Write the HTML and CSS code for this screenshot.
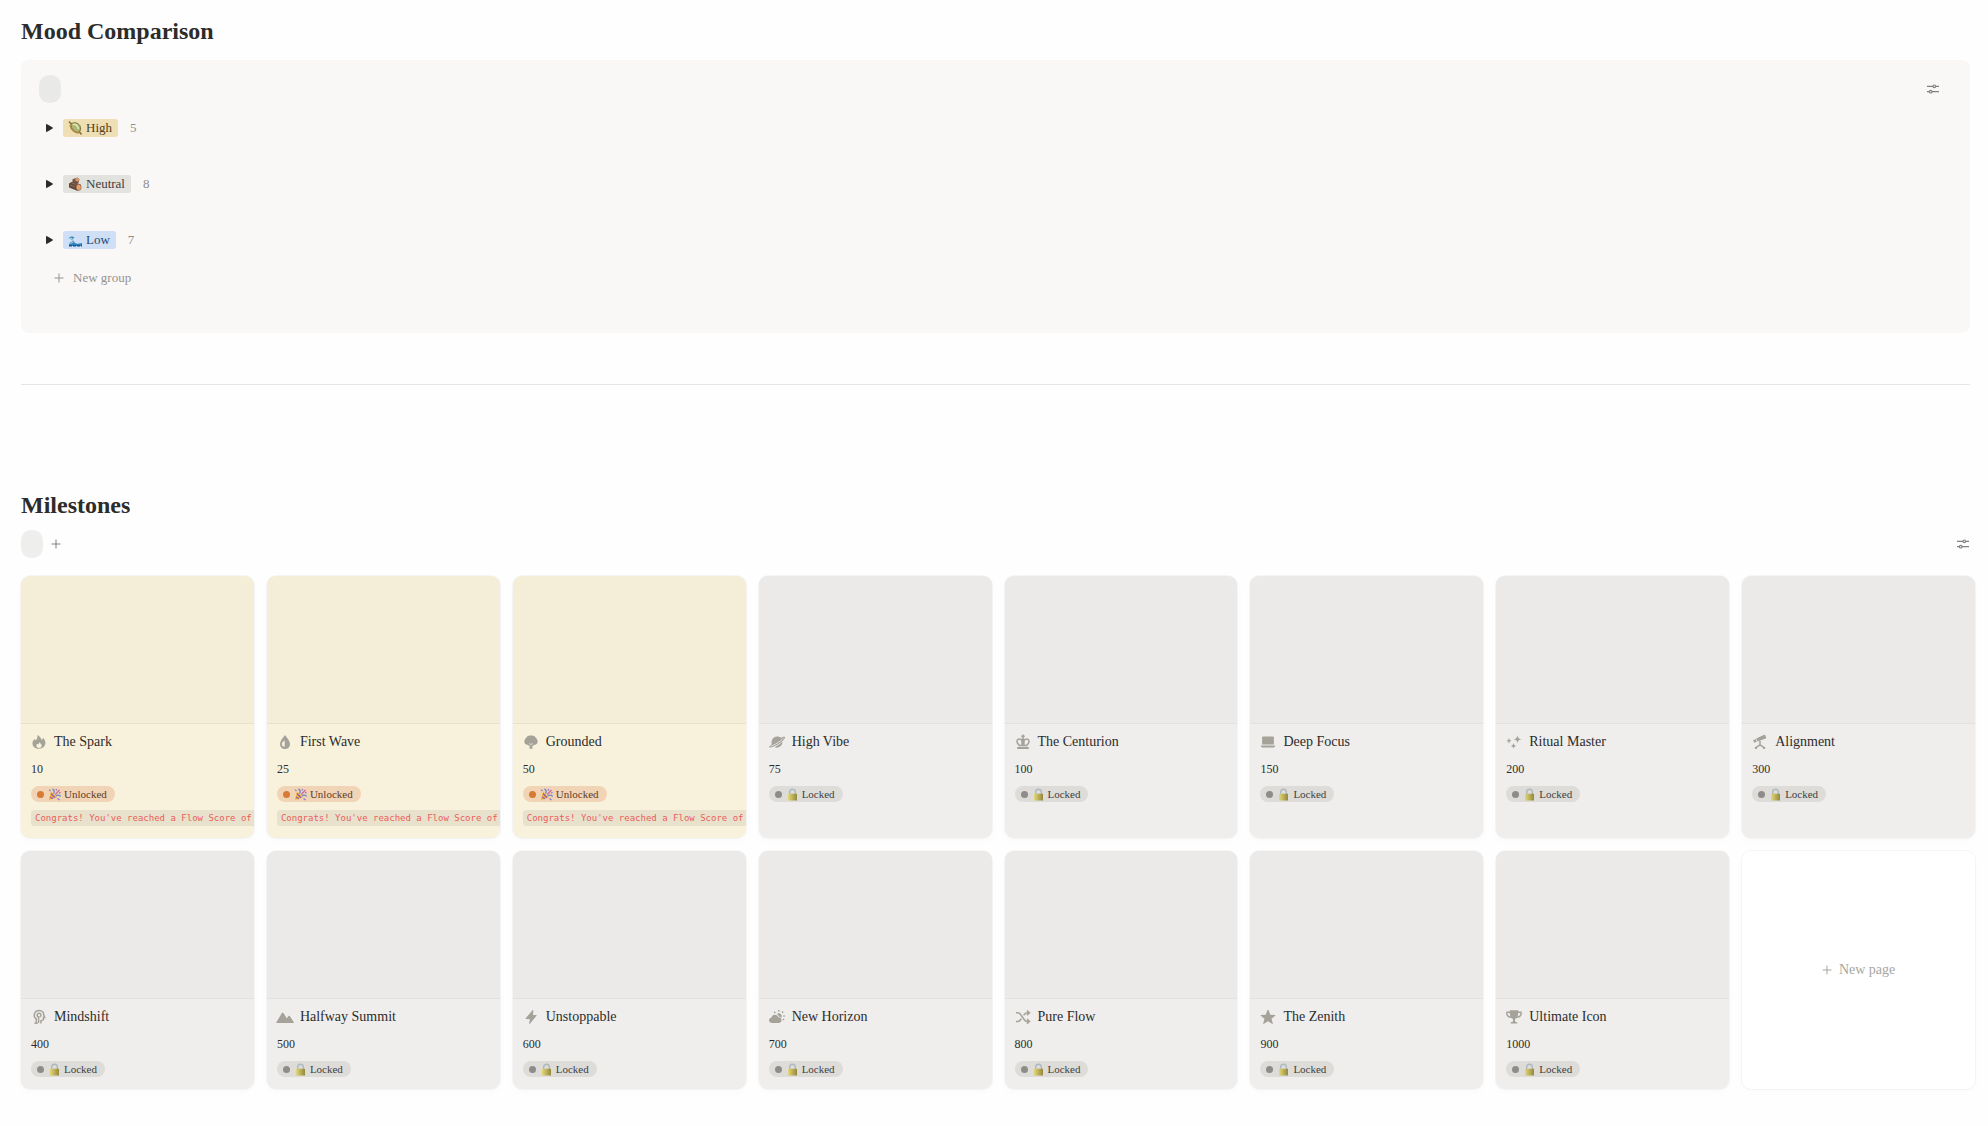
FILE: index.html
```html
<!doctype html>
<html lang="en">
	<head>
		<meta charset="UTF-8" />
		<meta name="viewport" content="width=device-width, initial-scale=1.0" />
		<title>Milestones</title>
		<link rel="stylesheet" href="styles.css">
	</head>
	<body>
		<!-- icon sprite -->
		<svg class="sprite" aria-hidden="true">
			<symbol id="sliders" viewBox="0 0 14 14">
				<path d="M1 4.300h6M9.600 4.300H13M1 9.700h2.400M6 9.700H13" />
				<circle cx="8.300" cy="4.300" r="1.300" />
				<circle cx="4.700" cy="9.700" r="1.300" />
			</symbol>
			<symbol id="plus" viewBox="0 0 10 10"><path d="M5 .5v9M.5 5h9" /></symbol>
			<symbol id="triangle" viewBox="0 0 7 8"><path d="M.7 0 6.7 3.6q.4.4 0 .8L.7 8Q0 8 0 7.300V.7Q0 0 .7 0z" /></symbol>
			<symbol id="flame" viewBox="0 0 16 16">
				<path d="M6.300 1C7 4 5.500 5 4.900 6.600L3.700 5C2 6.500 1.300 8 1.500 9.700 1.800 13 4.500 14.800 8 14.800s6.300-2.300 6.400-5.700c.1-2-1-4.200-2.200-5.200L10.500 6.200C10.300 4 8.700 2 6.300 1zM8.100 8.300c1.800 1.300 2.700 2.300 2.500 3.700-.2 1.300-1.300 1.900-2.600 1.900s-2.400-.7-2.600-2c-.1-.9.3-1.700.9-2.200l1 .9c.6-.6.9-1.300.8-2.300z" />
			</symbol>
			<symbol id="drop" viewBox="0 0 16 16">
				<path fill-rule="evenodd" d="M8 1C5.800 4.200 3 6.900 3 9.900 3 12.900 5.200 15 8 15s5-2.100 5-5.100C13 6.900 10.200 4.200 8 1zM7.700 6.300v6.500C5.900 12.700 4.800 11.600 4.800 10c0-1.300 1.400-2.200 2.900-3.700z" />
			</symbol>
			<symbol id="tree" viewBox="0 0 16 16">
				<path d="M8 1.500c2.500-.4 4.300.7 4.900 2.600 1.300.9 1.900 2.300 1.700 3.900-.2 1.900-1.400 2.800-2.900 2.700L9.300 12l.3 2.700H6.400L6.700 12l-2.400-1.300C2.800 10.800 1.500 9.900 1.400 8c-.1-1.600.5-3 1.700-3.900C3.700 2.200 5.500 1.100 8 1.500z" />
				<path class="cut" d="m6.200 9.300 1.700 1.400 1.800-1.400" />
			</symbol>
			<symbol id="planet" viewBox="0 0 16 16">
				<path d="M2.800 10.300C1.800 6.500 4 3 8 2.600c1.700-.1 3 .3 4 1.200 2-1 3.500-1.300 3.900-.8.800 1-1.800 3.900-5.600 6.400C6.600 11.900 1.300 14.300.2 13.200-.1 12.600.8 11.700 2.800 10.300z" />
				<path d="M13.400 7.600c.3 3.300-2.300 6.100-5.700 6.100-.8 0-1.500-.2-2.100-.5 2.700-1.100 5.600-3.100 7.800-5.600z" />
				<path class="cut" d="M1.500 12.200C4 11.900 12 7.300 14.500 3.900" />
			</symbol>
			<symbol id="crown" viewBox="0 0 16 16">
				<path d="M8 .6v4M6.300 2.200h3.400" class="line" />
				<path d="M4.300 11.200C2 9.400 1.300 7 2.800 5.600 4.500 4.200 7.200 5.400 8 8.200c.8-2.800 3.500-4 5.200-2.600 1.500 1.400.8 3.800-1.500 5.600" class="line" />
				<path d="M6.300 5 8 3.800 9.700 5v6.500H6.300zM3.600 10.700h8.800v1.600H3.600zM2.200 13h11.600v1.900H2.200z" />
			</symbol>
			<symbol id="laptop" viewBox="0 0 16 16">
				<path d="M3.100 2.400h9.800q1 0 1 1v7.200H2.100V3.400q0-1 1-1zM.9 11.500h14.200q0 2-1.500 2H2.400q-1.500 0-1.500-2z" />
			</symbol>
			<symbol id="sparkle" viewBox="0 0 16 16">
				<path d="M11.500 1q.3 4 4 4.300-3.700.3-4 4.300-.3-4-4-4.300 3.700-.3 4-4.300zM3 3.900q.3 2.700 2.700 2.900Q3.300 7 3 9.700 2.700 7 .3 6.800 2.700 6.600 3 3.900zM7.500 8.800q.3 2.900 2.800 3.100-2.500.2-2.800 3.100-.3-2.900-2.800-3.100 2.500-.2 2.800-3.100z" />
			</symbol>
			<symbol id="telescope" viewBox="0 0 16 16">
				<path d="M12.200.7q.7-.3 1 .4l1 2.600q.2.700-.5.9L5.500 7.600 4.200 4.500zM3.600 5l1.100 2.700-2.600 1-.9-2.400z" />
				<path d="M8 7v5M8 10.800 2.800 14.300M8 10.800l5.200 3.500M3 14.200h2M11 14.200h2" class="line" />
			</symbol>
			<symbol id="mind" viewBox="0 0 16 16">
				<path class="line" d="M5.300 14.400V10C1.800 7.700 3 1.500 8.100 1.500c3 0 4.700 2 4.600 4.600l1 2.300h-1.300v2.300c-1 .9-2 .5-2.500.9v2.800M3.500 14.300h3.200" />
				<path class="line" d="M7.600 14V8C5.200 7 6 4.100 8.100 4.200c2.300.1 2.300 2.900.6 3.700" />
			</symbol>
			<symbol id="mountain" viewBox="0 0 16 14">
				<path d="M-.6 12.300 4.900 3.100q.8-1.100 1.600 0l3.300 5.400 1.600-2.400q.7-.9 1.400 0l4 6.200q.2.600-.4.600H-.2q-.7 0-.4-.6z" />
			</symbol>
			<symbol id="bolt" viewBox="0 0 16 16">
				<path d="M9.900 1q.5-.2.500.4L10 6h3.200q.7.100.3.800L6.900 14.800q-.7.500-.7-.3L6.800 10H3q-.7-.1-.3-.8L9.300 1.400z" />
			</symbol>
			<symbol id="horizon" viewBox="0 0 16 16">
				<path d="M3.300 14C1.300 14 0 12.900 0 11.300 0 9.900 1 8.900 2.400 8.700c.4-1.900 1.700-3 3.500-3 1.700 0 3 1 3.500 2.600 1.900.1 3.100 1.200 3.100 2.900 0 1.700-1.200 2.800-3 2.800z" />
				<path d="M7.700 4.900c2-1.600 5.400-.2 5 2.700-.1.600-.3 1-.6 1.300-.5-.7-1.200-1.100-2.100-1.300-.4-1.200-1.200-2.200-2.300-2.700z" />
				<path class="line" d="M9.800 2.600V1M6.200 4 5.300 2.700M13 3.800l1.100-1.200M14.300 7h1.500M13.800 10l1.300.9" />
			</symbol>
			<symbol id="shuffle" viewBox="0 0 16 16">
				<path class="line" d="M1 3.800h1.800c1.400 0 2 .6 2.800 1.700L9.500 11c.8 1 1.500 1.600 2.800 1.600h2M1 12.400h1.800c1.400 0 2.100-.6 2.800-1.600l.9-1.200M8.600 6.400l.9-1.100c.8-1 1.500-1.500 2.800-1.500h2M12 1.500l2.500 2.300L12 6.100M12 10.100l2.500 2.400-2.500 2.300" />
			</symbol>
			<symbol id="star" viewBox="0 0 16 16">
				<path d="M8.600 1.200 10.300 5.700l4.700.2q.8.300.2.900l-3.700 3 1.300 4.500q0 .8-.8.500L8 12.200l-4 2.600q-.8.300-.8-.5l1.300-4.500-3.700-3q-.6-.6.200-.9l4.700-.2 1.700-4.500q.6-.7 1.200 0z" />
			</symbol>
			<symbol id="trophy" viewBox="0 0 16 16">
				<path d="M3.800 1.300h8.400v1.500c0 3.600-.6 6.400-3.200 7.300v2.500l2.300.9v1.100H4.700v-1.100l2.300-.9v-2.500C4.400 9.200 3.800 6.400 3.800 2.800z" />
				<path class="line" d="M4 3.300H1C.4 6.100 2 8.300 5.200 8.200M12 3.300h3c.6 2.800-1 5-4.200 4.900" />
			</symbol>
			<!-- coloured emoji -->
			<symbol id="emoji-shell" viewBox="0 0 14 14">
				<path d="M1 .6 4.500 4M10.500 9.500l3 4" fill="none" stroke="#8c7436" stroke-width="1.600" />
				<path d="M3 2.800c3.500-2 7-.9 8.800 1.800 1.500 2.500.8 5.200-1 6.800-4 .3-8-3-7.800-8.600z" fill="#a8b779" stroke="#806d36" />
				<path d="M5 3.600c2.500-1 5 1 5.200 4.400" fill="none" stroke="#e5e8b2" stroke-width="1.500" />
				<path d="M2 4c1 4.500 4 7.500 9 8" fill="none" stroke="#b2883d" stroke-width="1.400" />
			</symbol>
			<symbol id="emoji-wood" viewBox="0 0 14 14">
				<path d="M4.500 2.300 9.500.6l2 2-1.300 4L4.500 7z" fill="#795443" />
				<path d="M1 6.600 4 4.800l8.800 2.700-.7 5-3 1.200L1 10.500z" fill="#63483b" />
				<ellipse cx="9.300" cy="2.600" rx="2" ry="1.900" fill="#d49a72" />
				<ellipse cx="10.700" cy="10.300" rx="2.500" ry="3.100" fill="#e1a574" stroke="#8a5840" stroke-width=".6" />
				<path d="m2 8 5 1.700M3.600 6l5 1.400" stroke="#a3775b" stroke-width=".8" />
			</symbol>
			<symbol id="emoji-wave" viewBox="0 0 14 14">
				<path d="M1 13V9.700c2-.2 2.600-1.700 4.800-1.700-2-.8-2.600-2.600-5.200-2.400C2.500 2.800 5 3.300 6.500 4.600 4.300 5 5 8 7 10c1.800 1.400 4.500.5 7 0v3z" fill="#2e83b9" />
				<path d="M1.500 5.500c2-.8 3 .3 4 1.500M1 10.300c2-.2 3-.6 4.300-1.300" fill="none" stroke="#c7edf2" />
				<path d="M1 12.700h13" stroke="#19549a" stroke-width="1.500" stroke-dasharray="3 1" />
			</symbol>
			<symbol id="emoji-party" viewBox="0 0 13 13">
				<path d="M.8 12.200 3 3.500l6 5.700z" fill="#f0b92c" />
				<path d="m2 9 3 1.800M3 5.500l4 4.200" stroke="#9a5bb0" stroke-width="1.300" />
				<path d="M5.500 5.500C7 4 6 2 4.500.8M8 8c1.500-1.500 3.500-.8 4.600.5" fill="none" stroke="#6488d1" stroke-width="1.300" />
				<path d="M7.200 6.500 11.500 2" stroke="#d36a9e" stroke-width="1.400" />
				<path d="M1.200 1.800 2.500 3M8.500 1l-.4 1.500M12.500 4.300l-1.300 1M9.500 10.500l2 1.500" stroke="#9777c6" stroke-width="1.300" />
			</symbol>
			<symbol id="emoji-lock" viewBox="0 0 13 13">
				<linearGradient id="gold" x2="1"><stop stop-color="#e4d879" /><stop offset="1" stop-color="#93883c" /></linearGradient>
				<path d="M3.700 6V4q0-2.800 2.800-2.800T9.300 4v2" fill="none" stroke="#adb8bf" stroke-width="1.400" />
				<path d="M2 5.800h9v6.700H2z" fill="url(#gold)" />
			</symbol>
		</svg>

		<main class="page">
			<section class="mood">
				<h2 class="heading">Mood Comparison</h2>
				<div class="board">
					<div class="toolbar">
						<button class="view-tab" aria-label="Current view"></button>
						<button class="icon-btn settings" aria-label="View settings"><svg class="sliders"><use href="#sliders" /></svg></button>
					</div>
					<div class="groups">
						<div class="group">
							<button class="icon-btn" aria-label="Toggle High"><svg class="triangle"><use href="#triangle" /></svg></button>
							<span class="tag tag-yellow"><svg class="tag-emoji"><use href="#emoji-shell" /></svg>High</span>
							<span class="count">5</span>
						</div>
						<div class="group">
							<button class="icon-btn" aria-label="Toggle Neutral"><svg class="triangle"><use href="#triangle" /></svg></button>
							<span class="tag tag-gray"><svg class="tag-emoji"><use href="#emoji-wood" /></svg>Neutral</span>
							<span class="count">8</span>
						</div>
						<div class="group">
							<button class="icon-btn" aria-label="Toggle Low"><svg class="triangle"><use href="#triangle" /></svg></button>
							<span class="tag tag-blue"><svg class="tag-emoji"><use href="#emoji-wave" /></svg>Low</span>
							<span class="count">7</span>
						</div>
					</div>
					<button class="new-group"><svg class="plus"><use href="#plus" /></svg>New group</button>
				</div>
			</section>

			<hr class="divider" />

			<section class="milestones">
				<h2 class="heading">Milestones</h2>
				<div class="toolbar">
					<button class="view-tab" aria-label="Current view"></button>
					<button class="icon-btn" aria-label="Add view"><svg class="plus"><use href="#plus" /></svg></button>
					<button class="icon-btn settings" aria-label="View settings"><svg class="sliders"><use href="#sliders" /></svg></button>
				</div>

				<div class="gallery">
					<article class="card unlocked">
						<div class="cover"></div>
						<div class="card-body">
							<h3 class="card-title"><svg class="icon"><use href="#flame" /></svg>The Spark</h3>
							<div class="score">10</div>
							<span class="status"><i class="dot"></i><svg class="emoji"><use href="#emoji-party" /></svg>Unlocked</span>
							<code class="note">Congrats! You've reached a Flow Score of</code>
						</div>
					</article>
					<article class="card unlocked">
						<div class="cover"></div>
						<div class="card-body">
							<h3 class="card-title"><svg class="icon"><use href="#drop" /></svg>First Wave</h3>
							<div class="score">25</div>
							<span class="status"><i class="dot"></i><svg class="emoji"><use href="#emoji-party" /></svg>Unlocked</span>
							<code class="note">Congrats! You've reached a Flow Score of</code>
						</div>
					</article>
					<article class="card unlocked">
						<div class="cover"></div>
						<div class="card-body">
							<h3 class="card-title"><svg class="icon"><use href="#tree" /></svg>Grounded</h3>
							<div class="score">50</div>
							<span class="status"><i class="dot"></i><svg class="emoji"><use href="#emoji-party" /></svg>Unlocked</span>
							<code class="note">Congrats! You've reached a Flow Score of</code>
						</div>
					</article>
					<article class="card">
						<div class="cover"></div>
						<div class="card-body">
							<h3 class="card-title"><svg class="icon"><use href="#planet" /></svg>High Vibe</h3>
							<div class="score">75</div>
							<span class="status"><i class="dot"></i><svg class="emoji"><use href="#emoji-lock" /></svg>Locked</span>
						</div>
					</article>
					<article class="card">
						<div class="cover"></div>
						<div class="card-body">
							<h3 class="card-title"><svg class="icon"><use href="#crown" /></svg>The Centurion</h3>
							<div class="score">100</div>
							<span class="status"><i class="dot"></i><svg class="emoji"><use href="#emoji-lock" /></svg>Locked</span>
						</div>
					</article>
					<article class="card">
						<div class="cover"></div>
						<div class="card-body">
							<h3 class="card-title"><svg class="icon"><use href="#laptop" /></svg>Deep Focus</h3>
							<div class="score">150</div>
							<span class="status"><i class="dot"></i><svg class="emoji"><use href="#emoji-lock" /></svg>Locked</span>
						</div>
					</article>
					<article class="card">
						<div class="cover"></div>
						<div class="card-body">
							<h3 class="card-title"><svg class="icon"><use href="#sparkle" /></svg>Ritual Master</h3>
							<div class="score">200</div>
							<span class="status"><i class="dot"></i><svg class="emoji"><use href="#emoji-lock" /></svg>Locked</span>
						</div>
					</article>
					<article class="card">
						<div class="cover"></div>
						<div class="card-body">
							<h3 class="card-title"><svg class="icon"><use href="#telescope" /></svg>Alignment</h3>
							<div class="score">300</div>
							<span class="status"><i class="dot"></i><svg class="emoji"><use href="#emoji-lock" /></svg>Locked</span>
						</div>
					</article>
					<article class="card">
						<div class="cover"></div>
						<div class="card-body">
							<h3 class="card-title"><svg class="icon"><use href="#mind" /></svg>Mindshift</h3>
							<div class="score">400</div>
							<span class="status"><i class="dot"></i><svg class="emoji"><use href="#emoji-lock" /></svg>Locked</span>
						</div>
					</article>
					<article class="card">
						<div class="cover"></div>
						<div class="card-body">
							<h3 class="card-title"><svg class="icon"><use href="#mountain" /></svg>Halfway Summit</h3>
							<div class="score">500</div>
							<span class="status"><i class="dot"></i><svg class="emoji"><use href="#emoji-lock" /></svg>Locked</span>
						</div>
					</article>
					<article class="card">
						<div class="cover"></div>
						<div class="card-body">
							<h3 class="card-title"><svg class="icon"><use href="#bolt" /></svg>Unstoppable</h3>
							<div class="score">600</div>
							<span class="status"><i class="dot"></i><svg class="emoji"><use href="#emoji-lock" /></svg>Locked</span>
						</div>
					</article>
					<article class="card">
						<div class="cover"></div>
						<div class="card-body">
							<h3 class="card-title"><svg class="icon"><use href="#horizon" /></svg>New Horizon</h3>
							<div class="score">700</div>
							<span class="status"><i class="dot"></i><svg class="emoji"><use href="#emoji-lock" /></svg>Locked</span>
						</div>
					</article>
					<article class="card">
						<div class="cover"></div>
						<div class="card-body">
							<h3 class="card-title"><svg class="icon"><use href="#shuffle" /></svg>Pure Flow</h3>
							<div class="score">800</div>
							<span class="status"><i class="dot"></i><svg class="emoji"><use href="#emoji-lock" /></svg>Locked</span>
						</div>
					</article>
					<article class="card">
						<div class="cover"></div>
						<div class="card-body">
							<h3 class="card-title"><svg class="icon"><use href="#star" /></svg>The Zenith</h3>
							<div class="score">900</div>
							<span class="status"><i class="dot"></i><svg class="emoji"><use href="#emoji-lock" /></svg>Locked</span>
						</div>
					</article>
					<article class="card">
						<div class="cover"></div>
						<div class="card-body">
							<h3 class="card-title"><svg class="icon"><use href="#trophy" /></svg>Ultimate Icon</h3>
							<div class="score">1000</div>
							<span class="status"><i class="dot"></i><svg class="emoji"><use href="#emoji-lock" /></svg>Locked</span>
						</div>
					</article>
					<button class="new-page"><svg class="plus"><use href="#plus" /></svg>New page</button>
				</div>
			</section>
		</main>
	</body>
</html>
```
FILE: styles.css
```css
* {
	margin: 0;
	padding: 0;
	box-sizing: border-box;
}

body {
	font-family: "Liberation Serif", "Times New Roman", serif;
	font-size: 14px;
	color: #2c2c2b;
	background: #fefefe;
}

button {
	font-family: inherit;
	border: none;
	background: none;
	cursor: pointer;
}

svg {
	display: block;
	flex-shrink: 0;
	overflow: visible;
}

symbol {
	overflow: visible;
}

.sprite {
	position: absolute;
	width: 0;
	height: 0;
}

.page {
	padding: 15px 13px 36px 21px;
}

.heading {
	font-size: 24px;
	line-height: 32px;
	font-weight: 700;
}

.toolbar {
	display: flex;
	align-items: center;
	gap: 8px;
	height: 28px;
}

.view-tab {
	width: 22px;
	height: 28px;
	border-radius: 10px;
	background: #eeeeec;
}

.icon-btn {
	display: flex;
	align-items: center;
	color: #2c2c2b;
}

.toolbar .icon-btn {
	color: #83827f;
}

.settings {
	margin-left: auto;
}

.sliders {
	width: 14px;
	height: 14px;
	fill: none;
	stroke: currentColor;
	stroke-width: 1.2;
}

.plus {
	width: 10px;
	height: 10px;
	fill: none;
	stroke: currentColor;
}

/* mood board */
.mood {
	margin-right: 5px;
}

.board {
	margin-top: 13px;
	padding: 15px 30px 45px 18px;
	border-radius: 8px;
	background: #f9f8f7;
}

.board .view-tab {
	background: #e9e9e7;
}

.groups {
	display: flex;
	flex-direction: column;
	gap: 36px;
	padding: 15px 0 18px 7px;
}

.group {
	display: flex;
	align-items: center;
	height: 20px;
}

.triangle {
	width: 7px;
	height: 8px;
	fill: currentColor;
}

.tag {
	display: flex;
	align-items: center;
	gap: 4px;
	height: 18px;
	margin: 0 12px 0 10px;
	padding: 0 6px 0 5px;
	border-radius: 3px;
	font-size: 13px;
}

.tag-emoji {
	width: 14px;
	height: 14px;
}

.tag-yellow {
	background: #efdfb5;
	color: #51401b;
}

.tag-gray {
	background: #e2e2de;
	color: #42403d;
}

.tag-blue {
	background: #cfdff6;
	color: #264a72;
}

.count {
	font-size: 13px;
	color: #8f8e8b;
}

.new-group {
	display: flex;
	align-items: center;
	gap: 9px;
	height: 20px;
	padding-left: 15px;
	font-size: 13px;
	color: #94938f;
}

.divider {
	margin: 51px 5px 104px 0;
	border: none;
	border-top: 1px solid #e6e5e3;
}

/* milestones gallery */
.milestones .toolbar {
	margin: 9px 5px 18px 0;
}

.gallery {
	display: grid;
	grid-template-columns: repeat(auto-fill, minmax(220px, 1fr));
	gap: 13px;
}

.card,
.new-page {
	border-radius: 9px;
	box-shadow: 0 0 0 1px rgba(0, 0, 0, 0.03), 0 3px 8px rgba(0, 0, 0, 0.02);
}

.card {
	overflow: hidden;
	background: #efeeec;
}

.cover {
	height: 148px;
	border-bottom: 1px solid #e2e1df;
	background: #ebeae8;
}

.card-body {
	display: flex;
	flex-direction: column;
	align-items: flex-start;
	gap: 8px;
	padding: 8px 0 12px 10px;
}

.card-title {
	display: flex;
	align-items: center;
	gap: 7px;
	font-size: 14px;
	line-height: 20px;
	font-weight: 400;
}

.icon {
	width: 16px;
	height: 16px;
	fill: #a5a29a;
	color: #a5a29a;
}

.line {
	fill: none;
	stroke: currentColor;
	stroke-width: 1.5;
}

.cut {
	fill: none;
	stroke: #efeeec;
	stroke-width: 0.8;
}

.score {
	font-size: 12px;
	line-height: 18px;
}

.status {
	display: flex;
	align-items: center;
	height: 16px;
	padding: 0 8px 0 6px;
	border-radius: 8px;
	font-size: 11px;
	color: #42413e;
	background: #dddcd9;
}

.dot {
	width: 7px;
	height: 7px;
	border-radius: 50%;
	background: #8d8c89;
}

.emoji {
	width: 13px;
	height: 13px;
	margin: 0 3px 0 4px;
}

.unlocked {
	background: #f8f2dc;
}

.unlocked .cover {
	border-color: #e9e2cb;
	background: #f4eed9;
}

.unlocked .status {
	color: #603d25;
	background: #f1d3b5;
}

.unlocked .dot {
	background: #d57b33;
}

/* runs to the card's right edge */
.note {
	align-self: stretch;
	height: 16px;
	padding-left: 4px;
	border-radius: 3px 0 0 3px;
	font-family: "DejaVu Sans Mono", monospace;
	font-size: 9px;
	line-height: 16px;
	white-space: nowrap;
	overflow: hidden;
	color: #ed5b5c;
	background: #e8e2cc;
}

.new-page {
	display: flex;
	align-items: center;
	justify-content: center;
	gap: 7px;
	font-size: 14px;
	color: #a8a69f;
	background: #ffffff;
}
```
